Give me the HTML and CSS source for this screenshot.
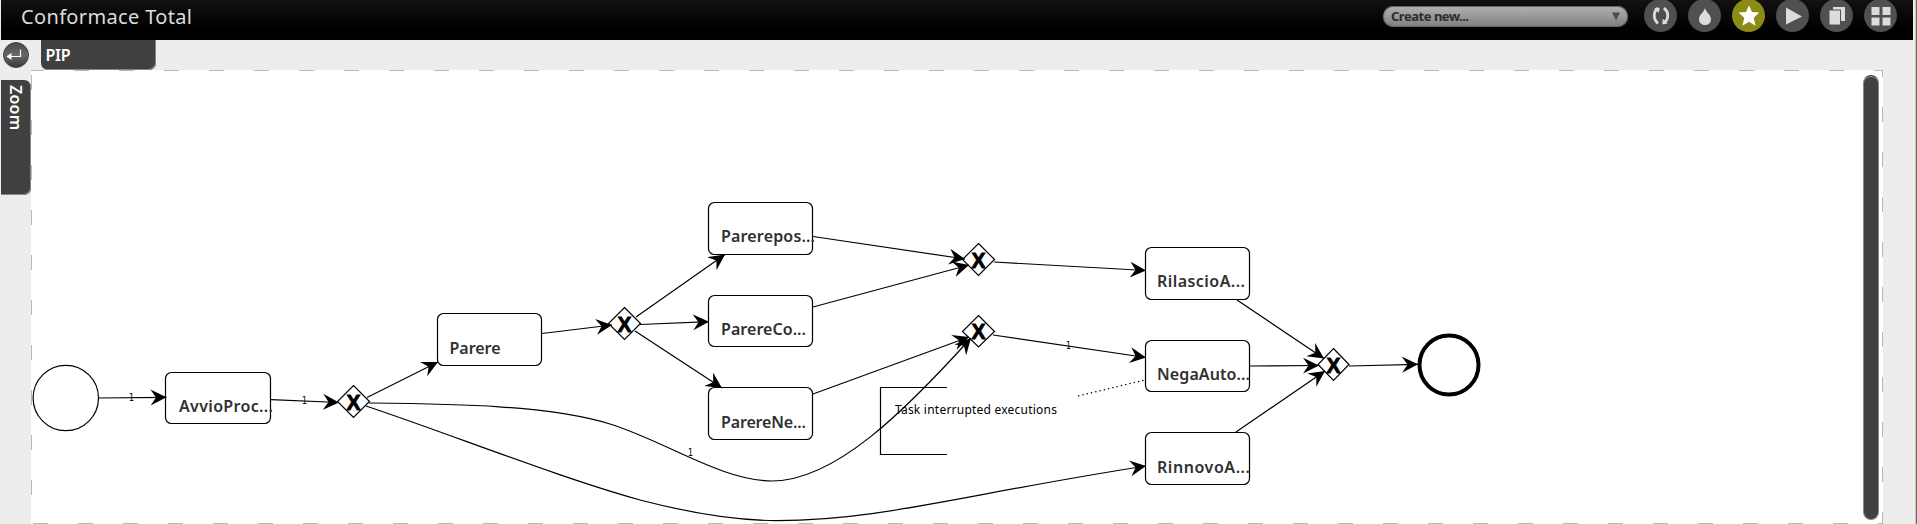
FILE: index.html
```html
<!DOCTYPE html>
<html lang="en">
<head>
<meta charset="utf-8">
<title>Conformace Total</title>
<link rel="stylesheet" href="styles.css">
</head>
<body>
<div class="app">
  <header class="header">
    <svg class="title" width="190" height="40"><text class="title-text" x="20" y="24" textLength="171">Conformace Total</text></svg>
    <div class="tools">
      <div class="select">
        <svg width="245" height="21"><text class="select-text" x="8" y="14.5" textLength="78">Create new...</text><path d="M229 6.5h8l-4 8z" fill="#4c4c4c"/></svg>
      </div>
      <svg class="icon" viewBox="-16.5 -16.5 33 33"><circle r="16.5"/><g class="ring"><path d="M-2.5-7.2C-7.5-4-7.500 4-2.500 7.800M3.500 7.500C8.500 4 8.500-4 3.300-7.200"/></g><path class="glyph" d="M-6-7.500l5.200-.3-1 5.200zM7 8.200l-5.200.6.6-5.600z"/></svg>
      <svg class="icon" viewBox="-16.5 -16.5 33 33"><circle r="16.5"/><path class="glyph" d="M.5-7.500C1.500-3 6.500-1 6.500 4A6 5.500 0 0 1-5.500 4C-5.500-1-.5-3 .5-7.500z"/></svg>
      <svg class="icon active" viewBox="-16.500 -16.500 33 33"><circle r="16.5"/><path class="glyph" d="M.5-10.300L3.500-3.500 10.800-3 5.300 2.200 7 10.200.5 6.300-6 10.200-4.300 2.200-10-3-2.500-3.500z"/></svg>
      <svg class="icon" viewBox="-16.5 -16.5 33 33"><circle r="16.5"/><path class="glyph" d="M-6.500-8L9.500 1-6.500 9z"/></svg>
      <svg class="icon" viewBox="-16.5 -16.5 33 33"><circle r="16.5"/><path class="glyph" d="M-3.500-8.500H8.500V5.500H4.500V-6H-3.500z"/><path class="glyph" d="M-7-5H3.500V9H-7z"/></svg>
      <svg class="icon" viewBox="-16.5 -16.5 33 33"><circle r="16.5"/><path class="glyph" d="M-9-8.500h8v8h-8zM2-8.500h8v8H2zM-9 2h8v8h-8zM2 2h8v8H2z"/></svg>
    </div>
  </header>
  <main class="main">
    <aside class="side">
      <svg class="back" viewBox="0 0 26 26">
        <defs><linearGradient id="ball" x2="0" y2="1"><stop offset="0" stop-color="#474747"/><stop offset=".5" stop-color="#686868"/><stop offset="1" stop-color="#383838"/></linearGradient></defs>
        <circle cx="13" cy="13" r="12.500" fill="url(#ball)" stroke="#444"/>
        <path d="M17.500 7.500V14.500H6" fill="none" stroke="#fff" stroke-width="1.200"/><path d="M3.500 14.500l5-3.500v7z" fill="#fff"/>
      </svg>
      <div class="zoom-tab"><svg width="29" height="114"><text class="tab-text" transform="translate(8.500 5) rotate(90)" textLength="45">Zoom</text></svg></div>
    </aside>
    <section class="content">
      <div class="pip-tab"><svg width="114" height="29"><text class="tab-text" x="4.500" y="21" textLength="25">PIP</text></svg></div>
      <div class="canvas">
        <svg class="diagram" viewBox="31 70 1852 454" width="1852" height="454">
          <defs>
            <marker id="arrow" markerUnits="userSpaceOnUse" markerWidth="18" markerHeight="18" refX="16" refY="8" orient="auto"><path d="M16 8L0 0L5.500 8L0 16z"/></marker>
          </defs>
          <g class="frame">
            <path d="M29 70.500H1882" /><path d="M33 523.500H1882"/><path d="M31.500 75V524"/><path d="M1882.500 62V524"/>
          </g>
          <circle class="node" cx="65.800" cy="398" r="32.700"/>
          <circle class="node end" cx="1449" cy="365" r="29.500"/>
          <g class="node">
            <rect x="165.500" y="372.500" width="105" height="51" rx="6"/>
            <rect x="437.500" y="313.500" width="104" height="52" rx="6"/>
            <rect x="708.500" y="202.500" width="104" height="52" rx="6"/>
            <rect x="708.500" y="295.500" width="104" height="51" rx="6"/>
            <rect x="708.500" y="387.500" width="104" height="52" rx="6"/>
            <rect x="1145.500" y="247.500" width="104" height="52" rx="6"/>
            <rect x="1145.500" y="340.500" width="104" height="51" rx="6"/>
            <rect x="1145.500" y="432.500" width="104" height="52" rx="6"/>
            <path d="M353.500 385.500l16 16-16 16-16-16z"/>
            <path d="M624.500 307.500l16 16-16 16-16-16z"/>
            <path d="M978.500 243.500l16 16-16 16-16-16z"/>
            <path d="M978.500 315.500l16 16-16 15.500-16-15.500z"/>
            <path d="M1333.500 348.500l15.500 16-15.500 16-15.500-16z"/>
          </g>
          <g class="gate-mark">
            <text x="346.500" y="409.500" textLength="14" lengthAdjust="spacingAndGlyphs">X</text>
            <text x="617.500" y="331.500" textLength="14" lengthAdjust="spacingAndGlyphs">X</text>
            <text x="971.500" y="267.500" textLength="14" lengthAdjust="spacingAndGlyphs">X</text>
            <text x="971.500" y="339" textLength="14" lengthAdjust="spacingAndGlyphs">X</text>
            <text x="1326.500" y="372.500" textLength="14" lengthAdjust="spacingAndGlyphs">X</text>
          </g>
          <g class="edge">
            <path d="M98.500 398L166.500 397.300"/>
            <path d="M271 399.700L339 402.500"/>
            <path d="M367 397.500L438 362"/>
            <path d="M542 333.500L612 325"/>
            <path d="M636 317L725 254.500"/>
            <path d="M640 324.500L709 321.700"/>
            <path d="M635 331L722 388"/>
            <path d="M813 236.500L965 259"/>
            <path d="M813 307L969 265"/>
            <path d="M813 394L969 337"/>
            <path d="M994 262L1146 270.500"/>
            <path d="M993 335L1146 357.500"/>
            <path d="M1237 300L1324 358.500"/>
            <path d="M1250 366L1319 365.500"/>
            <path d="M1236 432L1325 371"/>
            <path d="M1349 366L1418 364.300"/>
            <path d="M369 403C455 404 548 405 610 424C665 441 722 481 772 481C835 481 905 411 971 338"/>
            <path d="M366 406C450 434 560 478 640 500C690 513 735 520.600 777 520.600C880 520.600 960 495 1146 466"/>
          </g>
          <path class="dotted" d="M1078 396L1145 380"/>
          <path class="node" d="M947 387.500H880.500V454.500H947"/>
          <g class="label">
            <text x="179" y="412" textLength="94">AvvioProc...</text>
            <text x="449.500" y="354" textLength="51">Parere</text>
            <text x="721" y="242" textLength="94">Parerepos...</text>
            <text x="721" y="335" textLength="85">ParereCo...</text>
            <text x="721" y="428" textLength="85">ParereNe...</text>
            <text x="1157" y="287" textLength="88">RilascioA...</text>
            <text x="1157" y="380" textLength="93">NegaAuto...</text>
            <text x="1157" y="473" textLength="93">RinnovoA...</text>
          </g>
          <text class="note" x="895" y="414" textLength="162">Task interrupted executions</text>
          <g class="count">
            <text x="129" y="401" textLength="5" lengthAdjust="spacingAndGlyphs">1</text>
            <text x="302" y="404" textLength="5" lengthAdjust="spacingAndGlyphs">1</text>
            <text x="688" y="456" textLength="5" lengthAdjust="spacingAndGlyphs">1</text>
            <text x="1066" y="349" textLength="5" lengthAdjust="spacingAndGlyphs">1</text>
          </g>
        </svg>
        <div class="scrollbar"></div>
      </div>
    </section>
  </main>
</div>
</body>
</html>
```
FILE: styles.css
```css
* { box-sizing: border-box; }
body { margin: 0; background: #ededed; font-family: "Noto Sans", "Open Sans", sans-serif; overflow: hidden; }
svg { display: block; }
.app { width: 1917px; height: 524px; padding-left: 1px; padding-right: 1px; border-right: 1px solid #6e6a66; box-shadow: inset -1px 0 #c9c6c3; display: flex; flex-direction: column; }
.header { width: 1912px; height: 40px; flex: none; display: flex; justify-content: space-between; background: linear-gradient(#111, #000 75%); }
.title { overflow: visible; }
.title-text { font-size: 20px; fill: #dcdcdc; }
.tools { display: flex; align-items: flex-start; gap: 11px; padding-right: 16px; }
.select { width: 245px; height: 21px; margin: 6px 5px 0 0; border-radius: 11px; background: linear-gradient(#b2b2b2, #7e7e7e); box-shadow: inset 0 0 0 1px #666; }
.select-text { font: 700 13px "Noto Sans", sans-serif; fill: #2c2c2c; }
.icon { width: 33px; height: 33px; margin-top: -1px; fill: #505050; }
.icon .glyph { fill: #dcdcdc; }
.icon .ring { fill: none; stroke: #dcdcdc; stroke-width: 2.8; }
.icon.active { fill: #8b8b15; }
.icon.active .glyph { fill: #fff; }
.main { display: flex; flex: 1; }
.side { width: 30px; display: flex; flex-direction: column; gap: 12px; padding-top: 2px; }
.back { width: 26px; height: 26px; margin-left: 2px; }
.zoom-tab { width: 30px; height: 115px; background: #404040; border-radius: 0 7px 7px 0; box-shadow: inset -1px -1px #858585; }
.tab-text { font-size: 16px; font-weight: 600; fill: #fff; }
.content { width: 1852px; display: flex; flex-direction: column; }
.pip-tab { width: 115px; height: 30px; margin-left: 10px; background: #404040; border-radius: 0 0 7px 7px; box-shadow: inset -1px -1px #858585; }
.canvas { display: grid; height: 454px; background: #fff; }
.diagram, .scrollbar { grid-area: 1 / 1; }
.scrollbar { justify-self: end; width: 16px; height: 445px; margin: 5px 4px 0 0; background: #404040; border: 1px solid #8a8a8a; border-top-color: #444; border-radius: 8px; box-shadow: inset 0 2px 0 -1px #aaa; }
.frame { fill: none; stroke: #b8b8b8; stroke-width: 1; stroke-dasharray: 15 30; }
.node { fill: none; stroke: #000; stroke-width: 1.2; }
.end { stroke-width: 4; }
.edge { fill: none; stroke: #000; stroke-width: 1.2; }
.edge path { marker-end: url(#arrow); }
marker path { fill: #000; stroke: none; }
.dotted { fill: none; stroke: #000; stroke-width: 1.2; stroke-dasharray: 1.4 3; }
.label { font-size: 16px; font-weight: 600; fill: #303030; }
.note { font-size: 12px; fill: #000; }
.count { font-size: 11px; font-family: "DejaVu Sans", sans-serif; }
.gate-mark { font: 700 22px "Liberation Sans", sans-serif; stroke: #000; stroke-width: 0.9; }
```
